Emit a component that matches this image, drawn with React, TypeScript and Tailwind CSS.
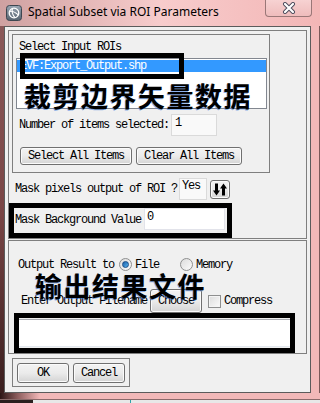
const mono =
  "font-['Liberation_Mono',monospace] text-[12px] leading-[12px] tracking-[-1.2px] text-black whitespace-nowrap";
const btn =
  "flex items-center justify-center rounded-[3px] border border-[#707070] bg-gradient-to-b from-[#f3f3f3] via-[#ebebeb] to-[#d4d4d4] shadow-[inset_0_0_0_1px_#fbfbfb]";
const cjk =
  "font-['Noto_Sans_CJK_SC',sans-serif] font-bold text-[27px] leading-[28px] tracking-[1.5px] text-black [text-shadow:-1px_1px_0_rgba(40,110,220,0.55)] whitespace-nowrap";

function Radio({ on }: { on?: boolean }) {
  return (
    <div className="w-[13px] h-[13px] shrink-0 rounded-full border border-[#8e8f8f] bg-gradient-to-br from-[#dcdcdc] to-[#fbfbfb] flex items-center justify-center">
      {on && <div className="w-[7px] h-[7px] rounded-full bg-gradient-to-br from-[#1b5fa8] to-[#58b4ef] border border-[#174b86]" />}
    </div>
  );
}

export default function App() {
  return (
    <div className="relative w-[320px] h-[403px] overflow-hidden bg-[#f2b8b8] flex flex-col">
      {/* title bar */}
      <div className="relative h-[26px] shrink-0 flex items-start bg-gradient-to-r from-[#cfa1a1] via-[#f7cccc] to-[#f3b6b6]">
        <svg width="16" height="16" viewBox="0 0 16 16" className="ml-[6px] mt-[5px] shrink-0">
          <defs>
            <linearGradient id="ig" x1="0" y1="0" x2="0" y2="1">
              <stop offset="0" stopColor="#9aa7b4" />
              <stop offset="1" stopColor="#56636f" />
            </linearGradient>
          </defs>
          <rect x="0.5" y="0.5" width="15" height="15" rx="3" fill="url(#ig)" stroke="#3d4650" />
          <circle cx="8" cy="8" r="4.8" fill="none" stroke="#fff" strokeWidth="1.3" />
          <path d="M4 6.5 C7 5.5 10 8 12.5 10" fill="none" stroke="#fff" strokeWidth="1.1" />
          <path d="M6.5 3.4 C5.5 7 7 10.5 9 12.6" fill="none" stroke="#fff" strokeWidth="1.1" />
        </svg>
        <span className="ml-[6px] mt-[4px] font-['Noto_Sans',sans-serif] text-[12px] leading-[16px] text-black whitespace-nowrap">
          Spatial Subset via ROI Parameters
        </span>
        <div className="absolute left-[265px] top-0 w-[47px] h-[17px] rounded-b-[4px] border border-t-0 border-[#9a7777] bg-gradient-to-b from-[#f7d2d2] to-[#efbcbc] flex items-center justify-center">
          <svg width="14" height="12" viewBox="0 0 14 12">
            <path d="M3 2 L11 10 M11 2 L3 10" stroke="#4a4a5a" strokeWidth="4" strokeLinecap="round" />
            <path d="M3 2 L11 10 M11 2 L3 10" stroke="#fff" strokeWidth="2.2" strokeLinecap="round" />
          </svg>
        </div>
      </div>

      {/* middle */}
      <div className="flex h-[367px] shrink-0">
        <div className="w-[4px] bg-gradient-to-b from-[#8a5858] via-[#7a4646] to-[#3a1e1e]" />
        <div className="w-[307px] border border-[#5b5b5b] bg-[#f0f0f0] flex flex-col">
          {/* panel 1 */}
          <div className="ml-[3px] mt-[3px] w-[299px] h-[209px] border border-[#7f7f7f] flex flex-col">
            <div className="ml-[3px] mt-[3px] w-[258px] h-[139px] border border-[#7f7f7f] flex flex-col">
              <div className={`${mono} ml-[6px] mt-[6px]`}>Select Input ROIs</div>
              <div className="ml-[3px] mt-[5px] w-[251px] h-[51px] border border-[#828790] bg-white flex flex-col">
                <div className={`${mono} mt-[1px] h-[12px] bg-[#3399ff] text-white pl-[3px]`}>
                  <span className="text-white">EVF:Export_Output.shp</span>
                </div>
                <div className={`${cjk} ml-[7px] mt-[10px]`}>裁剪边界矢量数据</div>
              </div>
              <div className="flex items-start mt-[5px] h-[22px]">
                <div className={`${mono} ml-[6px] mt-[5px]`}>Number of items selected:</div>
                <div className="ml-[2px] w-[46px] h-[22px] border border-[#dadada] bg-[#f9f9f9] pl-[3px] pt-[2px]">
                  <div className={mono}>1</div>
                </div>
              </div>
              <div className="flex mt-[11px] ml-[7px] gap-[4px]">
                <div className={`${btn} w-[112px] h-[18px]`}>
                  <span className={mono}>Select All Items</span>
                </div>
                <div className={`${btn} w-[106px] h-[18px]`}>
                  <span className={mono}>Clear All Items</span>
                </div>
              </div>
            </div>
            <div className="flex items-center mt-[5px] h-[22px]">
              <div className={`${mono} ml-[6px]`}>Mask pixels output of ROI ?</div>
              <div className="ml-[2px] w-[28px] h-[22px] border border-[#dadada] bg-[#f9f9f9] pl-[2px] pt-[1px] self-start">
                <div className={mono}>Yes</div>
              </div>
              <div className={`${btn} ml-[3px] w-[20px] h-[19px]`}>
                <svg width="14" height="13" viewBox="0 0 14 13">
                  <path d="M2 0.5 H5 V7.5 H7 L3.5 12.5 L0 7.5 H2 Z" fill="#000" />
                  <path d="M9 12.5 H12 V5.5 H14 L10.5 0.5 L7 5.5 H9 Z" fill="#000" />
                </svg>
              </div>
            </div>
            <div className="mt-[3px] w-[223px] h-[35px] border-[5px] border-black flex items-start">
              <div className={`${mono} ml-[1px] mt-[6px]`}>Mask Background Value</div>
              <div className="ml-[3px] w-[81px] h-[22px] border border-[#e2e3ea] bg-white pl-[2px] pt-[2px]">
                <div className={mono}>0</div>
              </div>
            </div>
          </div>

          {/* panel 2 */}
          <div className="ml-[3px] mt-[1px] w-[299px] h-[114px] border border-[#7f7f7f] flex flex-col">
            <div className="flex items-center mt-[17px] h-[13px]">
              <div className={`${mono} ml-[9px]`}>Output Result to</div>
              <div className="ml-[5px]">
                <Radio on />
              </div>
              <div className={`${mono} ml-[3px]`}>File</div>
              <div className="ml-[21px]">
                <Radio />
              </div>
              <div className={`${mono} ml-[3px]`}>Memory</div>
            </div>
            <div className="flex items-center mt-[18px] h-[24px]">
              <div className={`${mono} ml-[12px]`}>Enter Output Filename</div>
              <div className={`${btn} ml-[3px] w-[52px] h-[24px]`}>
                <span className={mono}>Choose</span>
              </div>
              <div className="ml-[6px] w-[13px] h-[13px] border border-[#8e8f8f] bg-gradient-to-br from-[#dcdcdc] to-[#fbfbfb] shadow-[inset_0_0_0_1px_#f4f4f4]" />
              <div className={`${mono} ml-[3px]`}>Compress</div>
            </div>
            <div className="ml-[5px] w-[281px] h-[40px] border-[5px] border-black flex flex-col">
              <div className="mt-[1px] h-[28px] bg-white border-t border-[#abadb3] border-b border-b-[#e3e9ef]" />
            </div>
          </div>

          {/* buttons */}
          <div className="ml-[7px] mt-[4px] w-[118px] h-[29px] border border-[#7f7f7f] flex items-start gap-[4px] pl-[4px] pt-[4px]">
            <div className={`${btn} w-[52px] h-[20px]`}>
              <span className={mono}>OK</span>
            </div>
            <div className={`${btn} w-[52px] h-[20px]`}>
              <span className={mono}>Cancel</span>
            </div>
          </div>
        </div>
        <div className="w-[9px] bg-[#f2b8b8] border-r border-[#7a5858]" />
      </div>

      {/* bottom frame */}
      <div className="h-[7px] shrink-0 bg-[linear-gradient(to_right,#2b1515,#8f5f5f_18px,#f2b8b8_40px)] border-b border-[#8a6a6a]" />
      <div className="h-[3px] shrink-0 flex">
        <div className="w-[33px] bg-[#2a2020]" />
        <div className="w-[97px] bg-[#e8e8e8]" />
        <div className="w-[1px] bg-[#2fa3a8]" />
        <div className="flex-1 bg-[#e8e8e8]" />
      </div>

      {/* annotations */}
      <div className="absolute left-[20px] top-[53px] w-[164px] h-[26px] border-[5px] border-black" />
      <div className={`${cjk} absolute left-[35px] top-[272px]`}>输出结果文件</div>
    </div>
  );
}
